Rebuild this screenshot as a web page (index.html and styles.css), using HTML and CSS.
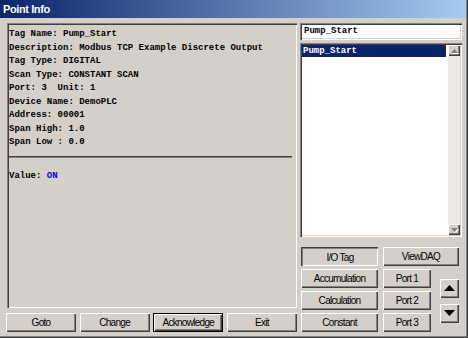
FILE: index.html
```html
<!DOCTYPE html>
<html>
<head>
<meta charset="utf-8">
<link rel="stylesheet" href="styles.css">
</head>
<body>
<div class="window">
  <div class="titlebar">Point Info</div>
  <div class="client">
    <div class="left">
      <div class="panel">
        <div class="line">Tag Name: Pump_Start</div>
        <div class="line">Description: Modbus TCP Example Discrete Output</div>
        <div class="line">Tag Type: DIGITAL</div>
        <div class="line">Scan Type: CONSTANT SCAN</div>
        <div class="line">Port: 3&nbsp; Unit: 1</div>
        <div class="line">Device Name: DemoPLC</div>
        <div class="line">Address: 00001</div>
        <div class="line">Span High: 1.0</div>
        <div class="line">Span Low : 0.0</div>
        <div class="sep"></div>
        <div class="line">Value: <span class="on">ON</span></div>
      </div>
      <div class="cmdrow">
        <div class="btn">Goto</div>
        <div class="btn">Change</div>
        <div class="btn default">Acknowledge</div>
        <div class="btn">Exit</div>
      </div>
    </div>
    <div class="right">
      <div class="textbox">Pump_Start</div>
      <div class="listbox">
        <div class="items">
          <div class="item selected">Pump_Start</div>
        </div>
        <div class="scrollbar">
          <div class="sbtn"><svg width="7" height="4" viewBox="0 0 7 4"><polygon points="3.5,0 7,4 0,4" fill="#808080"/></svg></div>
          <div class="track"></div>
          <div class="sbtn"><svg width="7" height="4" viewBox="0 0 7 4"><polygon points="0,0 7,0 3.5,4" fill="#808080"/></svg></div>
        </div>
      </div>
      <div class="btngrid">
        <div class="btn pressed">I/O Tag</div>
        <div class="btn wide">ViewDAQ</div>
        <div class="btn">Accumulation</div>
        <div class="btn">Port 1</div>
        <div class="arrows">
          <div class="btn arrow"><svg width="11" height="6" viewBox="0 0 11 6"><polygon points="5.5,0 11,6 0,6" fill="#000"/></svg></div>
          <div class="btn arrow"><svg width="11" height="6" viewBox="0 0 11 6"><polygon points="0,0 11,0 5.5,6" fill="#000"/></svg></div>
        </div>
        <div class="btn">Calculation</div>
        <div class="btn">Port 2</div>
        <div class="btn">Constant</div>
        <div class="btn">Port 3</div>
      </div>
    </div>
  </div>
</div>
</body>
</html>
```
FILE: styles.css
```css
html, body {
  margin: 0;
  padding: 0;
  background: #d4d0c8;
}
.window {
  width: 468px;
  height: 338px;
  box-sizing: border-box;
  background: #d4d0c8;
  box-shadow: inset -1px -1px #404040, inset -2px -2px #808080;
  padding: 0 2px 2px 0;
  overflow: hidden;
}
.titlebar {
  height: 18px;
  background: linear-gradient(to right, #0a246a, #a6caf0);
  color: #fff;
  font-family: "Liberation Sans", Arial, sans-serif;
  font-weight: bold;
  font-size: 11px;
  letter-spacing: -0.4px;
  line-height: 18px;
  padding-left: 3px;
}
.client {
  display: flex;
  gap: 3px;
  padding: 5px 0 0 7px;
}
.left {
  width: 290px;
  display: flex;
  flex-direction: column;
  gap: 5px;
}
.panel {
  height: 285px;
  box-sizing: border-box;
  box-shadow: inset 1px 1px #808080, inset 2px 2px #404040, inset -1px -1px #fff, inset -2px -2px #d4d0c8;
  padding: 5px 5px 0 2px;
  font-family: "Liberation Mono", "Courier New", monospace;
  font-weight: bold;
  font-size: 9px;
  color: #000;
}
.line {
  height: 13.5px;
  line-height: 13.5px;
  white-space: pre;
}
.sep {
  margin: 6.5px 0 12px 0;
  border-top: 1px solid #404040;
  border-bottom: 1px solid #808080;
}
.on {
  color: #0000ff;
}
.cmdrow {
  display: flex;
  justify-content: space-between;
  margin-left: -1px;
  width: 291px;
}
.cmdrow .btn {
  width: 70px;
  height: 19px;
}
.btn {
  box-sizing: border-box;
  background: #d4d0c8;
  box-shadow: inset 1px 1px #fff, inset -1px -1px #404040, inset -2px -2px #808080;
  display: flex;
  align-items: center;
  justify-content: center;
  font-family: "Liberation Sans", Arial, sans-serif;
  font-size: 10px;
  letter-spacing: -0.7px;
  color: #000;
  padding-bottom: 1px;
}
.btn.default {
  box-shadow: inset 0 0 0 1px #000, inset 2px 2px #fff, inset -2px -2px #404040, inset -3px -3px #808080;
}
.btn.pressed {
  box-shadow: inset 1px 1px #404040, inset 2px 2px #808080, inset -1px -1px #fff;
  padding: 2px 0 0 1px;
}
.right {
  width: 162px;
  display: flex;
  flex-direction: column;
}
.textbox {
  height: 17px;
  box-sizing: border-box;
  background: #fff;
  box-shadow: inset 1px 1px #808080, inset 2px 2px #404040, inset -1px -1px #fff, inset -2px -2px #d4d0c8;
  font-family: "Liberation Mono", "Courier New", monospace;
  font-weight: bold;
  font-size: 9px;
  line-height: 17px;
  padding-left: 4px;
  color: #000;
}
.listbox {
  margin-top: 3px;
  height: 194px;
  box-sizing: border-box;
  background: #fff;
  box-shadow: inset 1px 1px #808080, inset 2px 2px #404040, inset -1px -1px #fff, inset -2px -2px #d4d0c8;
  padding: 2px;
  display: flex;
}
.items {
  flex: 1;
  padding-right: 2px;
}
.item {
  height: 12px;
  line-height: 12px;
  font-family: "Liberation Mono", "Courier New", monospace;
  font-weight: bold;
  font-size: 9px;
  padding-left: 1px;
  color: #000;
}
.item.selected {
  background: #0a246a;
  color: #fff;
}
.scrollbar {
  width: 12px;
  display: flex;
  flex-direction: column;
  background: #ebe9e5;
}
.sbtn {
  height: 11px;
  box-sizing: border-box;
  background: #d4d0c8;
  box-shadow: inset 1px 1px #fff, inset -1px -1px #404040, inset -2px -2px #808080;
  display: flex;
  align-items: center;
  justify-content: center;
}
.sbtn svg {
  filter: drop-shadow(1px 1px 0 #fff);
}
.track {
  flex: 1;
}
.btngrid {
  margin: 10px 0 0 1px;
  display: grid;
  grid-template-columns: 77px 48px 23px;
  grid-template-rows: 19px 19px 19px 19px;
  column-gap: 5px;
  row-gap: 3px;
}
.btn.wide {
  grid-column: 2 / 4;
}
.arrows {
  grid-column: 3;
  grid-row: 2 / 5;
  display: flex;
  flex-direction: column;
  justify-content: center;
  align-items: flex-end;
  gap: 6px;
}
.btn.arrow {
  width: 19px;
  height: 19px;
  padding: 0;
}
```
